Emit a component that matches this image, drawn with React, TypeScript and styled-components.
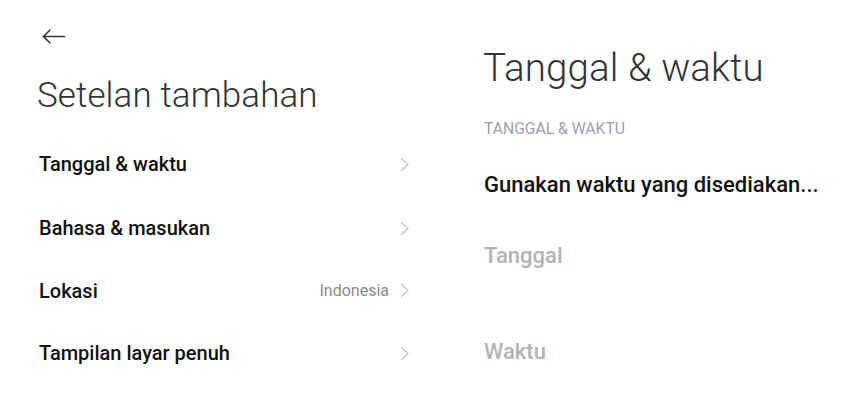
import React from 'react'
import styled, {createGlobalStyle} from 'styled-components'

const GlobalStyle = createGlobalStyle`
  html, body {
    margin: 0;
    padding: 0;
    background: #ffffff;
  }
  body {
    font-family: Roboto, "Noto Sans", "Liberation Sans", sans-serif;
    -webkit-font-smoothing: antialiased;
  }
`

const Screen = styled.div`
  display: grid;
  grid-template-columns: 446px 1fr;
  width: 849px;
  height: 410px;
  overflow: hidden;
  background: #ffffff;
`

const LeftPane = styled.div`
  display: flex;
  flex-direction: column;
  padding: 24px 36px 0 38px;
`

const RightPane = styled.div`
  display: flex;
  flex-direction: column;
  padding: 45px 20px 0 38px;
  min-width: 0;
`

const BackButton = styled.button`
  display: flex;
  align-items: center;
  width: 30px;
  height: 24px;
  padding: 0 0 0 4px;
  border: none;
  background: transparent;
  color: #333333;
  cursor: pointer;
`

const PageTitle = styled.h1<{$top?: number; $size: number}>`
  margin: ${({$top}) => $top ?? 0}px 0 0 -1px;
  font-size: ${({$size}) => $size}px;
  line-height: ${({$size}) => Math.round($size * 1.2)}px;
  font-weight: 300;
  color: #333333;
  letter-spacing: 0.1px;
`

const List = styled.div`
  display: flex;
  flex-direction: column;
  margin-top: 15px;
`

const Row = styled.div<{$height: number}>`
  display: flex;
  align-items: center;
  justify-content: space-between;
  height: ${({$height}) => $height}px;
`

const RowLabel = styled.span`
  margin-left: 1px;
  font-size: 20px;
  font-weight: 500;
  color: #111111;
`

const RowEnd = styled.div`
  display: flex;
  align-items: center;
  gap: 11px;
`

const RowValue = styled.span`
  font-size: 16px;
  color: #8a8a8a;
`

const SectionHeader = styled.div`
  margin-top: 28px;
  font-size: 15.7px;
  line-height: 20px;
  color: #9c9eb3;
  text-transform: uppercase;
`

const Item = styled.div<{$height: number; $disabled?: boolean}>`
  height: ${({$height}) => $height}px;
  font-size: 22px;
  line-height: 26px;
  font-weight: 500;
  color: ${({$disabled}) => ($disabled ? '#b2b2b2' : '#111111')};
  white-space: nowrap;
  overflow: hidden;
  text-overflow: ellipsis;
`

const ItemList = styled.div`
  display: flex;
  flex-direction: column;
  margin-top: 33px;
`

const BackArrow = () => (
    <svg width="24" height="15" viewBox="0 0 24 15" fill="none" stroke="currentColor" strokeWidth="1.5"
         strokeLinecap="round" strokeLinejoin="round">
        <path d="M1.5 7.5H22.5"/>
        <path d="M8 1L1.5 7.5L8 14"/>
    </svg>
)

const Chevron = () => (
    <svg width="10" height="15" viewBox="0 0 10 15" fill="none" stroke="#c2c2c2" strokeWidth="1.3"
         strokeLinecap="round" strokeLinejoin="round">
        <path d="M1.5 1.5L8 7.5L1.5 13.5"/>
    </svg>
)

const rows = [
    {label: 'Tanggal & waktu', height: 64},
    {label: 'Bahasa & masukan', height: 64},
    {label: 'Lokasi', value: 'Indonesia', height: 61},
    {label: 'Tampilan layar penuh', height: 64},
]

const App = () => {
    return (
        <Screen>
            <GlobalStyle/>
            <LeftPane>
                <BackButton aria-label="Kembali">
                    <BackArrow/>
                </BackButton>
                <PageTitle $top={27} $size={35}>Setelan tambahan</PageTitle>
                <List>
                    {rows.map((row) => (
                        <Row key={row.label} $height={row.height}>
                            <RowLabel>{row.label}</RowLabel>
                            <RowEnd>
                                {row.value && <RowValue>{row.value}</RowValue>}
                                <Chevron/>
                            </RowEnd>
                        </Row>
                    ))}
                </List>
            </LeftPane>
            <RightPane>
                <PageTitle $size={38.5}>Tanggal &amp; waktu</PageTitle>
                <SectionHeader>Tanggal &amp; waktu</SectionHeader>
                <ItemList>
                    <Item $height={71}>Gunakan waktu yang disediakan...</Item>
                    <Item $height={96} $disabled>Tanggal</Item>
                    <Item $height={40} $disabled>Waktu</Item>
                </ItemList>
            </RightPane>
        </Screen>
    )
}

export default App
